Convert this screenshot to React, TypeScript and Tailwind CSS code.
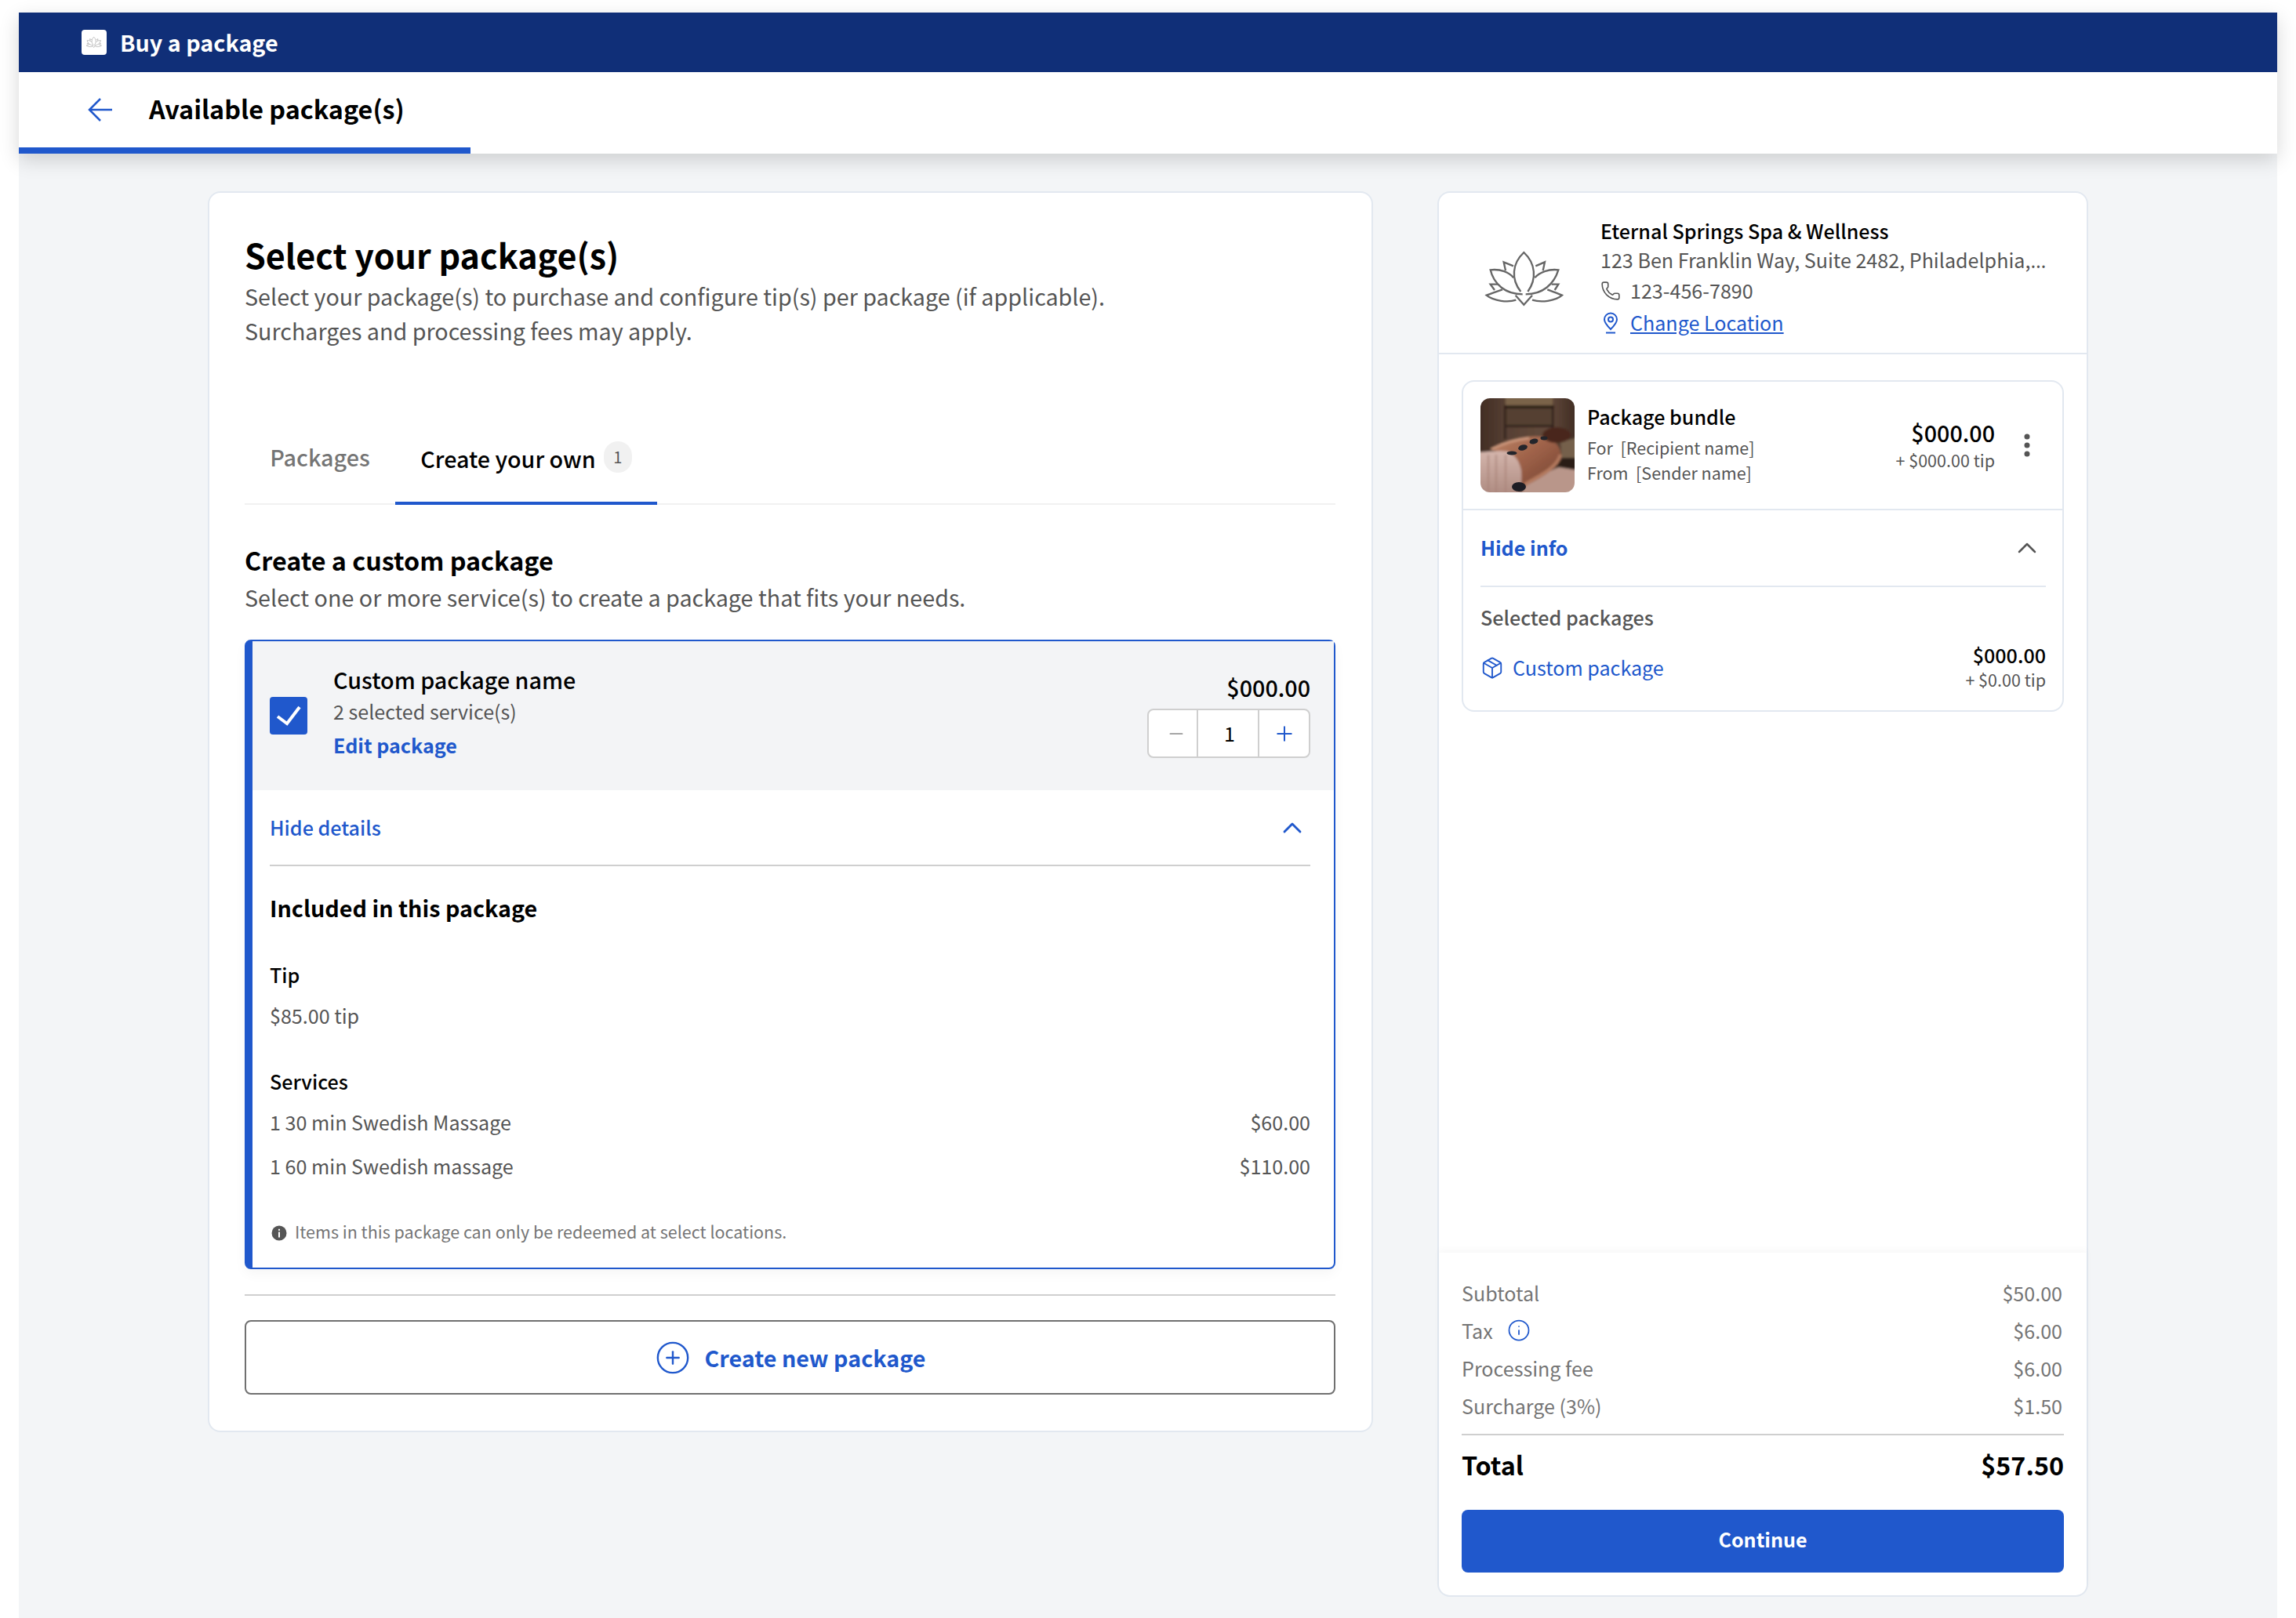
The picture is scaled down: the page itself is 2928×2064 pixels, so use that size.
import { ChevronUp, CirclePlus, Info, Minus, Package, Phone, Plus } from 'lucide-react'

const blue = 'text-[#2058cc]'

function Lotus({ width, height, stroke, color }: { width: number; height: number; stroke: number; color: string }) {
  return (
    <svg width={width} height={height} viewBox="30 50 330 240" fill="none" stroke={color} strokeWidth={stroke} strokeLinejoin="miter">
      <path d="M178 218C140 170 145 110 190 68C235 110 240 170 205 218" />
      <path d="M185 228C120 228 75 190 62 135C100 130 135 145 150 165" />
      <path d="M197 228C262 228 305 190 322 135C285 130 250 145 232 165" />
      <path d="M120 138L113 105L150 120" />
      <path d="M263 138L270 105L235 120" />
      <path d="M108 210C85 218 65 225 47 232C75 255 130 260 160 250" />
      <path d="M280 210C300 218 320 225 336 232C310 255 255 260 222 250" />
      <path d="M78 212L62 190L90 190" />
      <path d="M308 212L322 190L296 190" />
      <path d="M158 232L190 268L222 232" />
    </svg>
  )
}

function MassagePhoto() {
  return (
    <svg width="120" height="120" viewBox="0 0 120 120" className="block">
      <defs>
        <filter id="soft" x="-10%" y="-10%" width="120%" height="120%">
          <feGaussianBlur stdDeviation="1.4" />
        </filter>
        <linearGradient id="wall" x1="0" y1="0" x2="1" y2="0">
          <stop offset="0" stopColor="#3f2b22" />
          <stop offset="0.3" stopColor="#574034" />
          <stop offset="0.7" stopColor="#644b3c" />
          <stop offset="1" stopColor="#3d2a21" />
        </linearGradient>
        <linearGradient id="skin" x1="0" y1="0" x2="1" y2="1">
          <stop offset="0" stopColor="#bd8568" />
          <stop offset="0.45" stopColor="#9f6249" />
          <stop offset="1" stopColor="#70402f" />
        </linearGradient>
        <linearGradient id="sheet" x1="0" y1="0" x2="0" y2="1">
          <stop offset="0" stopColor="#d4b5ac" />
          <stop offset="1" stopColor="#ad8a80" />
        </linearGradient>
      </defs>
      <g filter="url(#soft)">
        <rect x="-4" y="-4" width="128" height="128" fill="url(#wall)" />
        <rect x="32" y="-2" width="60" height="11" fill="#7a6349" />
        <rect x="30" y="9" width="64" height="4" fill="#2c1f18" />
        <rect x="30" y="12" width="2.5" height="40" fill="#2c1f18" />
        <rect x="91" y="12" width="2.5" height="32" fill="#2c1f18" />
        <rect x="33" y="13" width="58" height="22" fill="#554032" />
        <rect x="33" y="34" width="58" height="3" fill="#33241c" />
        <path d="M102 56L124 50V88L104 84Z" fill="#75604c" />
        <path d="M124 76V94L96 88L104 76Z" fill="#2b1f18" />
        <path d="M50 124L62 104L100 88L124 92V124Z" fill="#b9968a" />
        <path d="M12 65C30 56 50 50 65 49C75 48 84 49 92 54C100 60 104 68 102 76C100 88 80 100 57 112L50 116L52 92L35 72Z" fill="url(#skin)" />
        <path d="M102 72C98 88 78 98 56 110" fill="none" stroke="#b57a5e" strokeWidth="4" />
        <path d="M14 65C30 57 48 52 62 51" fill="none" stroke="#cf9a7e" strokeWidth="3" />
        <ellipse cx="97" cy="47" rx="18" ry="10" fill="#4a281e" />
        <path d="M-4 69C12 68 24 66 35 68C46 74 50 82 52 92C53 102 52 112 50 124H-4Z" fill="url(#sheet)" />
        <path d="M10 72V124M20 72V124M32 72V124" stroke="#a98278" strokeWidth="1.6" />
      </g>
      <ellipse cx="40" cy="70" rx="6.5" ry="2.6" fill="#24252b" />
      <ellipse cx="54" cy="63" rx="6" ry="3.6" fill="#24252b" transform="rotate(-15 54 63)" />
      <ellipse cx="68" cy="55" rx="5.5" ry="3.4" fill="#24252b" transform="rotate(-12 68 55)" />
      <ellipse cx="81" cy="51" rx="4.5" ry="2.4" fill="#24252b" />
      <ellipse cx="49" cy="113" rx="9" ry="6" fill="#1d1d24" />
    </svg>
  )
}

function SummaryRow({ label, value, info }: { label: string; value: string; info?: boolean }) {
  return (
    <div className="flex h-12 items-center justify-between text-[25.1px] leading-[48px] text-[#757575]">
      <div className="flex items-center gap-[18px]">
        <span>{label}</span>
        {info && <Info size={30} strokeWidth={1.4} className={blue} />}
      </div>
      <span className="mr-0.5">{value}</span>
    </div>
  )
}

export default function App() {
  return (
    <div className="h-[2064px] w-[2928px] overflow-hidden bg-white px-6 pt-4 [font-family:'Noto_Sans_CJK_KR','Noto_Sans',sans-serif]">
      <div className="h-full bg-[#f3f5f7]">
        {/* Top bars */}
        <header className="relative z-10 shadow-[0_8px_24px_rgba(0,0,0,0.16)]">
          <div className="flex h-[76px] items-center bg-[#102f78] pl-20">
            <div className="flex h-8 w-8 items-center justify-center rounded bg-white">
              <Lotus width={22} height={16} stroke={9} color="#9a9a9a" />
            </div>
            <span className="ml-[17px] text-[28.7px] font-bold leading-10 text-white">Buy a package</span>
          </div>
          <div className="bg-white">
            <div className="flex h-[96px] items-center pl-[88px]">
              <svg width="31" height="30" viewBox="0 0 31 30" fill="none" stroke="#2058cc" strokeWidth="2.5">
                <path d="M31 15H2M16 1L2 15l14 14" />
              </svg>
              <h1 className="ml-[47px] pb-1 text-[32.3px] font-bold leading-[48px] text-black">Available package(s)</h1>
            </div>
            <div className="h-2 w-[576px] bg-[#2058cc]" />
          </div>
        </header>

        <main className="flex items-start gap-[82px] pl-[241px] pt-12">
          {/* Left card */}
          <section className="w-[1486px] rounded-2xl border-2 border-[#e2e8f0] bg-white pb-[46px] pl-[45px] pr-[46px] pt-[50px]">
            <h2 className="text-[43px] font-bold leading-[56px] text-black">Select your package(s)</h2>
            <p className="mt-1 text-[28.7px] leading-[44px] text-[#555]">
              Select your package(s) to purchase and configure tip(s) per package (if applicable).
              <br />
              Surcharges and processing fees may apply.
            </p>

            <div className="mt-[82px] flex h-[118px] border-b-2 border-[#f1f1f1]">
              <div className="flex h-[118px] w-[192px] items-center justify-center pb-1 text-[28.7px] font-medium text-[#757575]">Packages</div>
              <div className="flex h-[118px] w-[334px] items-center justify-center gap-[10px] border-b-4 border-[#2058cc] pt-1 text-[28.7px] font-medium text-black">
                <span>Create your own</span>
                <span className="-mt-1 flex h-10 w-9 items-center justify-center rounded-full bg-[#f1f1f1] text-[20px] font-normal text-[#555]">1</span>
              </div>
            </div>

            <h3 className="mt-12 text-[32.3px] font-bold leading-[44px] text-black">Create a custom package</h3>
            <p className="mt-1 text-[28.7px] leading-[44px] text-[#555]">Select one or more service(s) to create a package that fits your needs.</p>

            {/* Selected package */}
            <div className="mt-8 rounded-lg border-2 border-l-[10px] border-[#2058cc] bg-white pb-[30px] shadow-[0_6px_16px_rgba(0,0,0,0.04)]">
              <div className="flex h-[190px] justify-between bg-[#f3f4f6] pl-[22px] pr-[30px]">
                <div className="flex">
                  <div className="flex h-12 w-12 items-center justify-center self-center rounded bg-[#2058cc]">
                    <svg width="32" height="26" viewBox="0 0 32 26" fill="none" stroke="white" strokeWidth="4">
                      <path d="M2 14L14 23L30 2" />
                    </svg>
                  </div>
                  <div className="ml-[33px] pt-[29px]">
                    <div className="text-[28.7px] font-medium leading-10 text-black">Custom package name</div>
                    <div className="mt-0.5 text-[25.1px] leading-9 text-[#555]">2 selected service(s)</div>
                    <div className={`mt-[5px] text-[25.1px] font-bold leading-10 ${blue}`}>Edit package</div>
                  </div>
                </div>
                <div className="flex flex-col items-end pt-8">
                  <div className="text-[28.7px] font-medium leading-[54px] text-black">$000.00</div>
                  <div className="flex h-[63px] w-[208px] rounded-lg border-2 border-[#cfcfcf] bg-white">
                    <div className="flex w-[63px] items-center justify-center border-r-2 border-[#cfcfcf] pl-2 text-[#888]">
                      <Minus size={26} strokeWidth={1.6} />
                    </div>
                    <div className="flex w-[78px] items-center justify-center border-r-2 border-[#cfcfcf] pl-1 text-[25.1px] text-black">1</div>
                    <div className={`flex flex-1 items-center justify-center ${blue}`}>
                      <Plus size={30} strokeWidth={1.6} />
                    </div>
                  </div>
                </div>
              </div>

              <div className="ml-[22px] mr-[30px]">
                <div className={`flex h-[97px] items-center justify-between border-b-2 border-[#cfcfcf] ${blue}`}>
                  <span className="text-[25.1px] font-medium">Hide details</span>
                  <ChevronUp size={40} strokeWidth={1.7} className="mr-[3px]" />
                </div>
                <div className="mt-[33px] text-[28.7px] font-bold leading-10 text-black">Included in this package</div>
                <div className="mt-[47px] text-[25.1px] font-medium leading-9 text-black">Tip</div>
                <div className="mt-4 text-[25.1px] leading-9 text-[#555]">$85.00 tip</div>
                <div className="mt-12 text-[25.1px] font-medium leading-9 text-black">Services</div>
                <div className="mt-4 flex justify-between text-[25.1px] leading-9 text-[#555]">
                  <span>1 30 min Swedish Massage</span>
                  <span>$60.00</span>
                </div>
                <div className="mt-5 flex justify-between text-[25.1px] leading-9 text-[#555]">
                  <span>1 60 min Swedish massage</span>
                  <span>$110.00</span>
                </div>
                <div className="mt-[50px] flex items-center text-[21.5px] leading-8 text-[#757575]">
                  <svg width="20" height="20" viewBox="0 0 20 20" className="ml-[2px] mt-1">
                    <circle cx="10" cy="10" r="9.5" fill="#555" />
                    <rect x="9" y="8.5" width="2" height="7" fill="white" />
                    <rect x="9" y="4.8" width="2" height="2" fill="white" />
                  </svg>
                  <span className="ml-[10px]">Items in this package can only be redeemed at select locations.</span>
                </div>
              </div>
            </div>

            <div className="mt-8 h-0.5 bg-[#cfcfcf]" />
            <button className="mt-[31px] flex h-[95px] w-full items-center justify-center gap-[18px] rounded-lg border-2 border-[#707070] bg-white">
              <CirclePlus size={46} strokeWidth={1.25} className={blue} />
              <span className={`text-[28.7px] font-bold ${blue}`}>Create new package</span>
            </button>
          </section>

          {/* Right card */}
          <aside className="flex h-[1793px] w-[830px] flex-col rounded-2xl border-2 border-[#e2e8f0] bg-white">
            <div className="flex h-[206px] border-b-2 border-[#e2e8f0] pl-[55px] pt-[30px]">
              <div className="mt-10">
                <Lotus width={110} height={80} stroke={7} color="#666" />
              </div>
              <div className="ml-[41px] w-[574px]">
                <div className="text-[25.1px] font-medium leading-9 text-black">Eternal Springs Spa &amp; Wellness</div>
                <div className="h-[38px] whitespace-nowrap text-[25.1px] leading-[38px] text-[#555]">
                  123 Ben Franklin Way, Suite 2482, Philadelphia,<span className="tracking-[1.5px] [font-family:'Noto_Sans',sans-serif]">…</span>
                </div>
                <div className="mt-px flex h-10 items-center text-[25.1px] text-[#555]">
                  <Phone size={26} strokeWidth={1.5} className="text-[#555]" />
                  <span className="ml-3">123-456-7890</span>
                </div>
                <div className={`mt-px flex h-10 items-center text-[25.1px] ${blue}`}>
                  <svg width="26" height="28" viewBox="0 0 26 28" fill="none" stroke="currentColor" strokeWidth="2">
                    <path d="M13 22C8 17 5 13.5 5 9.5a8 8 0 0 1 16 0C21 13.5 18 17 13 22Z" />
                    <circle cx="13" cy="9.5" r="3" />
                    <path d="M7 26.5h12" />
                  </svg>
                  <span className="ml-3 underline">Change Location</span>
                </div>
              </div>
            </div>

            <div className="mx-[29px] mt-[33px] rounded-2xl border-2 border-[#e2e8f0]">
              <div className="flex items-center border-b-2 border-[#e2e8f0] py-[21px] pl-[22px] pr-[21px]">
                <div className="h-[120px] w-[120px] overflow-hidden rounded-xl">
                  <MassagePhoto />
                </div>
                <div className="ml-4 flex-1 self-start pt-[5px]">
                  <div className="text-[25.1px] font-medium leading-9 text-black">Package bundle</div>
                  <div className="mt-[5px] text-[21.5px] leading-[34px] text-[#555]">For&nbsp; [Recipient name]</div>
                  <div className="-mt-0.5 text-[21.5px] leading-[34px] text-[#555]">From&nbsp; [Sender name]</div>
                </div>
                <div className="self-start pt-6 text-right">
                  <div className="text-[28.7px] font-medium leading-10 text-black">$000.00</div>
                  <div className="text-[21.5px] leading-[30px] text-[#555]">+ $000.00 tip</div>
                </div>
                <svg width="8" height="30" viewBox="0 0 8 30" className="ml-[37px] mr-5" fill="#555">
                  <circle cx="4" cy="4" r="3.5" />
                  <circle cx="4" cy="15" r="3.5" />
                  <circle cx="4" cy="26" r="3.5" />
                </svg>
              </div>
              <div className="ml-[22px] mr-[21px]">
                <div className="flex h-[98px] items-center justify-between border-b-2 border-[#e2e8f0]">
                  <span className={`text-[25.1px] font-bold ${blue}`}>Hide info</span>
                  <ChevronUp size={40} strokeWidth={1.5} className="mr-1 text-[#555]" />
                </div>
                <div className="mt-5 text-[25.1px] font-medium leading-9 text-[#555]">Selected packages</div>
                <div className="mt-[13px] flex items-center justify-between pb-6">
                  <div className={`flex items-center pt-1 text-[25.1px] ${blue}`}>
                    <Package size={30} strokeWidth={1.5} />
                    <span className="ml-[11px]">Custom package</span>
                  </div>
                  <div className="text-right">
                    <div className="text-[25.1px] font-medium leading-[34px] text-black">$000.00</div>
                    <div className="text-[21.5px] leading-[30px] text-[#555]">+ $0.00 tip</div>
                  </div>
                </div>
              </div>
            </div>

            <div className="mt-auto rounded-b-2xl bg-white px-[29px] pb-[29px] pt-[27px] shadow-[0_-4px_8px_rgba(0,0,0,0.03)]">
              <SummaryRow label="Subtotal" value="$50.00" />
              <SummaryRow label="Tax" value="$6.00" info />
              <SummaryRow label="Processing fee" value="$6.00" />
              <SummaryRow label="Surcharge (3%)" value="$1.50" />
              <div className="mt-3 h-0.5 bg-[#cfcfcf]" />
              <div className="mt-[9px] flex h-14 items-center justify-between text-[32.3px] font-bold text-black">
                <span>Total</span>
                <span>$57.50</span>
              </div>
              <button className="mt-[30px] h-20 w-full rounded-lg bg-[#2058cc] pb-1 text-[25.1px] font-bold text-white">Continue</button>
            </div>
          </aside>
        </main>
      </div>
    </div>
  )
}
